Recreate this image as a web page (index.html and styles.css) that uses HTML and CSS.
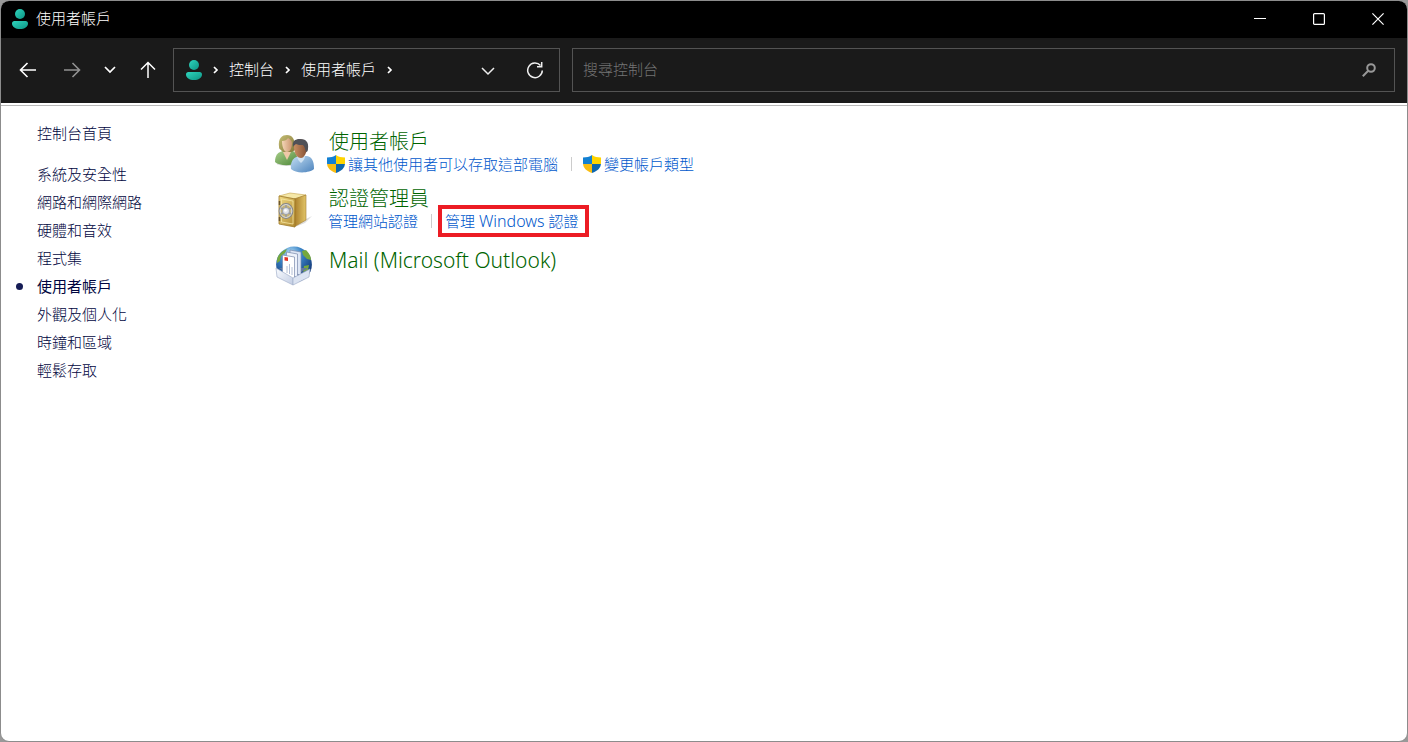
FILE: index.html
```html
<!DOCTYPE html>
<html lang="zh-Hant">
<head>
<meta charset="utf-8">
<title>使用者帳戶</title>
<link rel="stylesheet" href="styles.css">
</head>
<body>
<svg class="defs" width="0" height="0" aria-hidden="true">
  <defs>
    <linearGradient id="teal" x1="0" y1="0" x2="1" y2="1"><stop offset="0" stop-color="#2fd5bd"/><stop offset="1" stop-color="#0c9484"/></linearGradient>
    <symbol id="user" viewBox="0 0 16 20"><circle cx="8" cy="5" r="5" fill="url(#teal)"/><path d="M2.500 12h11a2.500 2.500 0 0 1 2.500 2.500C16 18 12.500 20 8 20s-8-2-8-5.500A2.500 2.500 0 0 1 2.500 12z" fill="url(#teal)"/></symbol>
    <clipPath id="shieldClip"><path d="M9 0c2.500 1.800 5.500 2.500 9 2.500V8c0 5-3.500 8-9 10C3.500 16 0 13 0 8V2.500C3.500 2.500 6.500 1.800 9 0z"/></clipPath>
    <symbol id="shield" viewBox="0 0 18 18"><g clip-path="url(#shieldClip)"><path d="M0 0h9v9H0z" fill="#1380d2"/><path d="M9 0h9v9H9z" fill="#ffd400"/><path d="M0 9h9v9H0z" fill="#f9bd12"/><path d="M9 9h9v9H9z" fill="#0f67ae"/></g></symbol>
    <symbol id="crumb" viewBox="0 0 6 8"><path d="M1 1l3 3-3 3" fill="none" stroke="#fff" stroke-width="1.700"/></symbol>
  </defs>
</svg>
<div class="window">
  <header class="titlebar">
    <svg class="user-icon"><use href="#user"/></svg>
    <span class="window-title">使用者帳戶</span>
    <div class="window-buttons">
      <button class="window-button" aria-label="最小化"><svg width="12" height="12"><path d="M0 5.500h12" stroke="#fff"/></svg></button>
      <button class="window-button" aria-label="最大化"><svg width="12" height="12"><rect x=".6" y=".6" width="10.800" height="10.800" rx="1" fill="none" stroke="#fff" stroke-width="1.200"/></svg></button>
      <button class="window-button" aria-label="關閉"><svg width="12" height="12"><path d="M.4.400l11.200 11.200M11.600.400L.4 11.600" stroke="#fff" stroke-width="1.200"/></svg></button>
    </div>
  </header>
  <div class="toolbar">
    <nav class="history">
      <button class="tool-button" aria-label="上一頁"><svg width="18" height="16" fill="none" stroke="#fff" stroke-width="1.600"><path d="M17 8H2M8.500 1L1.500 8l7 7"/></svg></button>
      <button class="tool-button" aria-label="下一頁"><svg width="18" height="16" fill="none" stroke="#929292" stroke-width="1.600"><path d="M1 8h15M9.500 1l7 7-7 7"/></svg></button>
      <button class="tool-button narrow" aria-label="最近的位置"><svg width="12" height="16" fill="none" stroke="#fff" stroke-width="1.700"><path d="M1 5l5 5 5-5"/></svg></button>
      <button class="tool-button" aria-label="上移"><svg width="16" height="18" fill="none" stroke="#fff" stroke-width="1.500"><path d="M8 17V2M1 8.500l7-7 7 7"/></svg></button>
    </nav>
    <div class="address">
      <svg class="user-icon"><use href="#user"/></svg>
      <svg class="crumb"><use href="#crumb"/></svg>
      <a class="crumb-link" href="#">控制台</a>
      <svg class="crumb"><use href="#crumb"/></svg>
      <a class="crumb-link" href="#">使用者帳戶</a>
      <svg class="crumb"><use href="#crumb"/></svg>
      <div class="address-actions">
        <button class="tool-button" aria-label="先前的位置"><svg width="14" height="12" fill="none" stroke="#eee" stroke-width="1.500"><path d="M1 4l6 6 6-6"/></svg></button>
        <button class="tool-button" aria-label="重新整理"><svg width="18" height="18" fill="none" stroke="#eee" stroke-width="1.500"><path d="M14.500 4.500A7.300 7.300 0 1 0 16.300 9.500"/><path d="M15.700 1v4.700H11"/></svg></button>
      </div>
    </div>
    <label class="search">
      <input class="search-input" type="text" placeholder="搜尋控制台" aria-label="搜尋控制台">
      <svg width="14" height="14" fill="none" stroke="#989898"><circle cx="9" cy="5" r="3.800" stroke-width="2"/><path d="M6.200 7.800L.800 13.200" stroke-width="2"/></svg>
    </label>
  </div>
  <div class="content">
    <nav class="sidebar">
      <a class="side-link home" href="#">控制台首頁</a>
      <a class="side-link" href="#">系統及安全性</a>
      <a class="side-link" href="#">網路和網際網路</a>
      <a class="side-link" href="#">硬體和音效</a>
      <a class="side-link" href="#">程式集</a>
      <a class="side-link current" href="#" aria-current="page">使用者帳戶</a>
      <a class="side-link" href="#">外觀及個人化</a>
      <a class="side-link" href="#">時鐘和區域</a>
      <a class="side-link" href="#">輕鬆存取</a>
    </nav>
    <main class="categories">
      <section class="category">
        <svg class="category-icon" viewBox="0 0 40 40">
          <defs>
            <linearGradient id="green" x1="0" y1="0" x2="1" y2="1"><stop offset="0" stop-color="#a9cf8b"/><stop offset="1" stop-color="#4d8738"/></linearGradient>
            <linearGradient id="blue" x1="0" y1="0" x2="1" y2="1"><stop offset="0" stop-color="#c3def2"/><stop offset="1" stop-color="#4c83bd"/></linearGradient>
            <linearGradient id="hair" x1="0" y1="0" x2="1" y2="1"><stop offset="0" stop-color="#c5bd74"/><stop offset="1" stop-color="#84783a"/></linearGradient>
            <linearGradient id="skin" x1="0" y1="0" x2="1" y2="0"><stop offset="0" stop-color="#f4d5b6"/><stop offset="1" stop-color="#cb9570"/></linearGradient>
            <linearGradient id="tan" x1="0" y1="0" x2="1" y2="0"><stop offset="0" stop-color="#c98e62"/><stop offset="1" stop-color="#835034"/></linearGradient>
          </defs>
          <ellipse cx="17" cy="31" rx="15" ry="2" fill="#ddd"/>
          <path d="M0 29c0-7 3-10 8-11l10 0c4 2 5 7 4 12-6 3-18 3-22-1z" fill="url(#green)"/>
          <path d="M4 14C3 5 7 2 12 2s9 4 8 15c-3 3-12 4-14 0-1-1-2-1-2-3z" fill="url(#hair)"/>
          <path d="M7 8c3 0 5-1 6-3 2 1 4 3 4 5 0 5-2 9-5 9s-5-5-5-11z" fill="url(#skin)"/>
          <path d="M8 19l4 8 4-8z" fill="#efc8a8"/>
          <path d="M16 36c-1-8 3-12 8-13h8c5 1 7 5 7 13-4 4-18 5-23 0z" fill="url(#blue)"/>
          <path d="M22 23h8c0 3-2 5-4 7-2-2-4-4-4-7z" fill="#cfe2f2"/>
          <path d="M19 13c0-5 3-7 6-7s7 3 7 8c0 6-3 11-6 11-4 0-7-4-7-12z" fill="url(#tan)"/>
          <path d="M18 14c-1-6 2-8 7-8 6 0 9 3 8 10 0 2-1 3-2 3-1-3-1-5-3-7-3 0-5 0-7-1-1 1-2 1-3 3z" fill="#505157"/>
        </svg>
        <div class="category-body">
          <a class="category-title" href="#">使用者帳戶</a>
          <div class="tasks">
            <a class="task with-shield" href="#"><svg class="shield"><use href="#shield"/></svg>讓其他使用者可以存取這部電腦</a>
            <a class="task with-shield" href="#"><svg class="shield"><use href="#shield"/></svg>變更帳戶類型</a>
          </div>
        </div>
      </section>
      <section class="category">
        <svg class="category-icon" viewBox="0 0 40 40">
          <defs>
            <linearGradient id="gold" x1="0" y1="0" x2="1" y2="1"><stop offset="0" stop-color="#efd982"/><stop offset="1" stop-color="#b28b32"/></linearGradient>
            <linearGradient id="goldSide" x1="0" y1="0" x2="1" y2="0"><stop offset="0" stop-color="#a77b28"/><stop offset="1" stop-color="#e2c568"/></linearGradient>
          </defs>
          <path d="M20 37l10-4 7-7-6 3z" fill="#ddd"/>
          <path d="M4 6l11-3 16 2-10 4z" fill="#f5e8a8" stroke="#c5a34b" stroke-width=".6"/>
          <path d="M19 9l12-4v25l-12 7z" fill="url(#goldSide)" stroke="#a07b31" stroke-width=".6"/>
          <path d="M4 6l16 3v28L4 34z" fill="url(#gold)" stroke="#9e7a2a" stroke-width=".8"/>
          <path d="M6.500 9l11.500 2v23l-11.500-2z" fill="none" stroke="#f5e5a2" stroke-width=".8"/>
          <ellipse cx="11" cy="21" rx="6.800" ry="7.300" fill="#c6b477" stroke="#85878a" stroke-width="1.200"/>
          <ellipse cx="11" cy="21" rx="5.900" ry="6.400" fill="none" stroke="#dcdee2"/>
          <path d="M11 15v12M6 18l10 6M6 24l10-6" stroke="#989b9f" stroke-width="1.500"/>
          <circle cx="11" cy="21" r="3.500" fill="#dfe2e8" stroke="#898e96" stroke-width=".7"/>
          <circle cx="10.500" cy="20.500" r="1.300" fill="#fff"/>
          <path d="M4.500 11v4M4.500 27v4" stroke="#6d572c" stroke-width="1.500"/>
        </svg>
        <div class="category-body">
          <a class="category-title" href="#">認證管理員</a>
          <div class="tasks">
            <a class="task" href="#">管理網站認證</a>
            <a class="task" href="#"><span class="highlight">管理 <span class="latin">Windows</span> 認證</span></a>
          </div>
        </div>
      </section>
      <section class="category">
        <svg class="category-icon raised" viewBox="0 0 40 40">
          <defs>
            <radialGradient id="globe" cx=".4" cy=".2" r=".8"><stop offset="0" stop-color="#b9e3fb"/><stop offset=".4" stop-color="#3a83c5"/><stop offset="1" stop-color="#0c2d6d"/></radialGradient>
            <linearGradient id="tray" x1="0" y1="0" x2="1" y2="1"><stop offset="0" stop-color="#fafcff"/><stop offset="1" stop-color="#c2cde3"/></linearGradient>
          </defs>
          <circle cx="19" cy="18.500" r="17.900" fill="url(#globe)"/>
          <path d="M4 9c2-3 5-5 8-6l-2 4-4 3-1 5-3 2c0-3 0-6 2-8zM27 5l4-1c3 3 5 6 5 10l-4-1-4-4zM29 20l5-1-1 5-5 2z" fill="#76a83e"/>
          <path d="M4 22l14 9 15-9z" fill="#65779f"/>
          <path d="M15 4l11 2v23l-11-2z" fill="#dde6f5" stroke="#7888aa" stroke-width=".7"/>
          <path d="M11.500 6l11 2v23l-11-2z" fill="#edf2fb" stroke="#7888aa" stroke-width=".7"/>
          <path d="M7.500 9l12 2v23l-12-4z" fill="#fff" stroke="#7888aa" stroke-width=".7"/>
          <path d="M9.500 11l3.500.5v3.500l-3.500-.5z" fill="#e33224"/>
          <path d="M12 20v7M14.500 18v10M17 21v8" stroke="#b3bfd6"/>
          <path d="M1 22l17 10v7L2 31z" fill="url(#tray)" stroke="#a5b1cb" stroke-width=".7"/>
          <path d="M18 32l17-9-1 8-16 8z" fill="#dce4f2" stroke="#a5b1cb" stroke-width=".7"/>
        </svg>
        <div class="category-body">
          <a class="category-title last" href="#">Mail (Microsoft Outlook)</a>
        </div>
      </section>
    </main>
  </div>
</div>
</body>
</html>
```
FILE: styles.css
```css
* {
  box-sizing: border-box;
}

body {
  margin: 0;
  background: #999;
  font: 300 15px/24px "Noto Sans", "Noto Sans CJK TC", sans-serif;
}

a {
  color: inherit;
  text-decoration: none;
}

button {
  display: flex;
  align-items: center;
  justify-content: center;
  padding: 0;
  border: 0;
  background: none;
}

svg {
  flex: none;
}

.defs {
  position: absolute;
}

.window {
  display: flex;
  flex-direction: column;
  min-height: 100vh;
  overflow: hidden;
  border: 1px solid #8c8c8c;
  border-radius: 9px;
  background: #fff;
}

.titlebar {
  display: flex;
  align-items: center;
  height: 37px;
  padding: 0 0 1px 11px;
  background: #000;
  color: #fff;
}

.user-icon {
  width: 16px;
  height: 20px;
}

.window-title {
  margin-left: 8px;
  padding-bottom: 2px;
}

.window-buttons {
  display: flex;
  height: 100%;
  margin-left: auto;
}

.window-button {
  width: 59px;
}

.toolbar {
  display: flex;
  align-items: center;
  height: 65px;
  padding: 0 12px 2px 9px;
  background: #1a1a1a;
  color: #fff;
}

.history {
  display: flex;
  flex: none;
  gap: 8px;
  margin-right: 7px;
}

.tool-button {
  width: 36px;
  height: 40px;
}

.tool-button.narrow {
  width: 24px;
}

.address,
.search {
  display: flex;
  align-items: center;
  height: 44px;
  border: 1px solid #535353;
}

.address {
  flex: 387 1 0;
  margin-right: 12px;
  padding-left: 12px;
}

.crumb {
  width: 6px;
  height: 8px;
  margin: 0 10px 0 11px;
}

.crumb-link {
  padding-bottom: 2px;
  white-space: nowrap;
}

.address-actions {
  display: flex;
  gap: 11px;
  margin-left: auto;
  padding-right: 6px;
}

.search {
  flex: 823 1 0;
  padding: 0 18px 0 10px;
}

.search-input {
  flex: 1;
  min-width: 0;
  padding: 0 0 2px;
  border: 0;
  outline: 0;
  background: none;
  color: #fff;
  font: inherit;
}

.search-input::placeholder {
  color: #747474;
  opacity: 1;
}

.content {
  display: flex;
  flex: 1;
  margin-top: 2px;
  border-top: 1px solid #b9b9b9;
}

.sidebar {
  display: flex;
  flex-direction: column;
  width: 274px;
  padding: 13px 0 0 36px;
  color: #000540;
}

.side-link {
  position: relative;
  line-height: 28px;
}

.home {
  margin-bottom: 13px;
}

.current {
  font-weight: 400;
}

.current::before {
  position: absolute;
  top: 11px;
  left: -21px;
  width: 7px;
  height: 7px;
  border-radius: 50%;
  background: #151c55;
  content: "";
}

.categories {
  display: flex;
  flex: 1;
  flex-direction: column;
  gap: 9px;
  padding-top: 23px;
}

.category {
  display: flex;
  gap: 12px;
}

.category-icon {
  width: 40px;
  height: 40px;
  margin-top: 4px;
}

.category-icon.raised {
  margin-top: 3px;
}

.category-title {
  display: block;
  padding: 2px 0 0 2px;
  color: #006400;
  font-size: 20px;
  line-height: 22px;
}

.category-title.last {
  padding-top: 6px;
  font-size: 21px;
}

.tasks {
  display: flex;
  padding-bottom: 2px;
  color: #0058cc;
  line-height: 22px;
}

.task {
  display: flex;
  align-items: center;
  padding-left: 1px;
}

.with-shield {
  gap: 3px;
  padding-left: 0;
}

.task + .task {
  padding-left: 0;
}

.task + .task::before {
  width: 1px;
  height: 14px;
  margin: 0 13px;
  background: #ccc;
  content: "";
}

.with-shield + .with-shield::before {
  margin: 0 8px 0 13px;
}

.highlight {
  padding-right: 4px;
  line-height: 18px;
  outline: 4px solid #ec1c24;
  outline-offset: 3px;
}

.latin {
  font-size: 16px;
}

.shield {
  width: 18px;
  height: 18px;
}
```
